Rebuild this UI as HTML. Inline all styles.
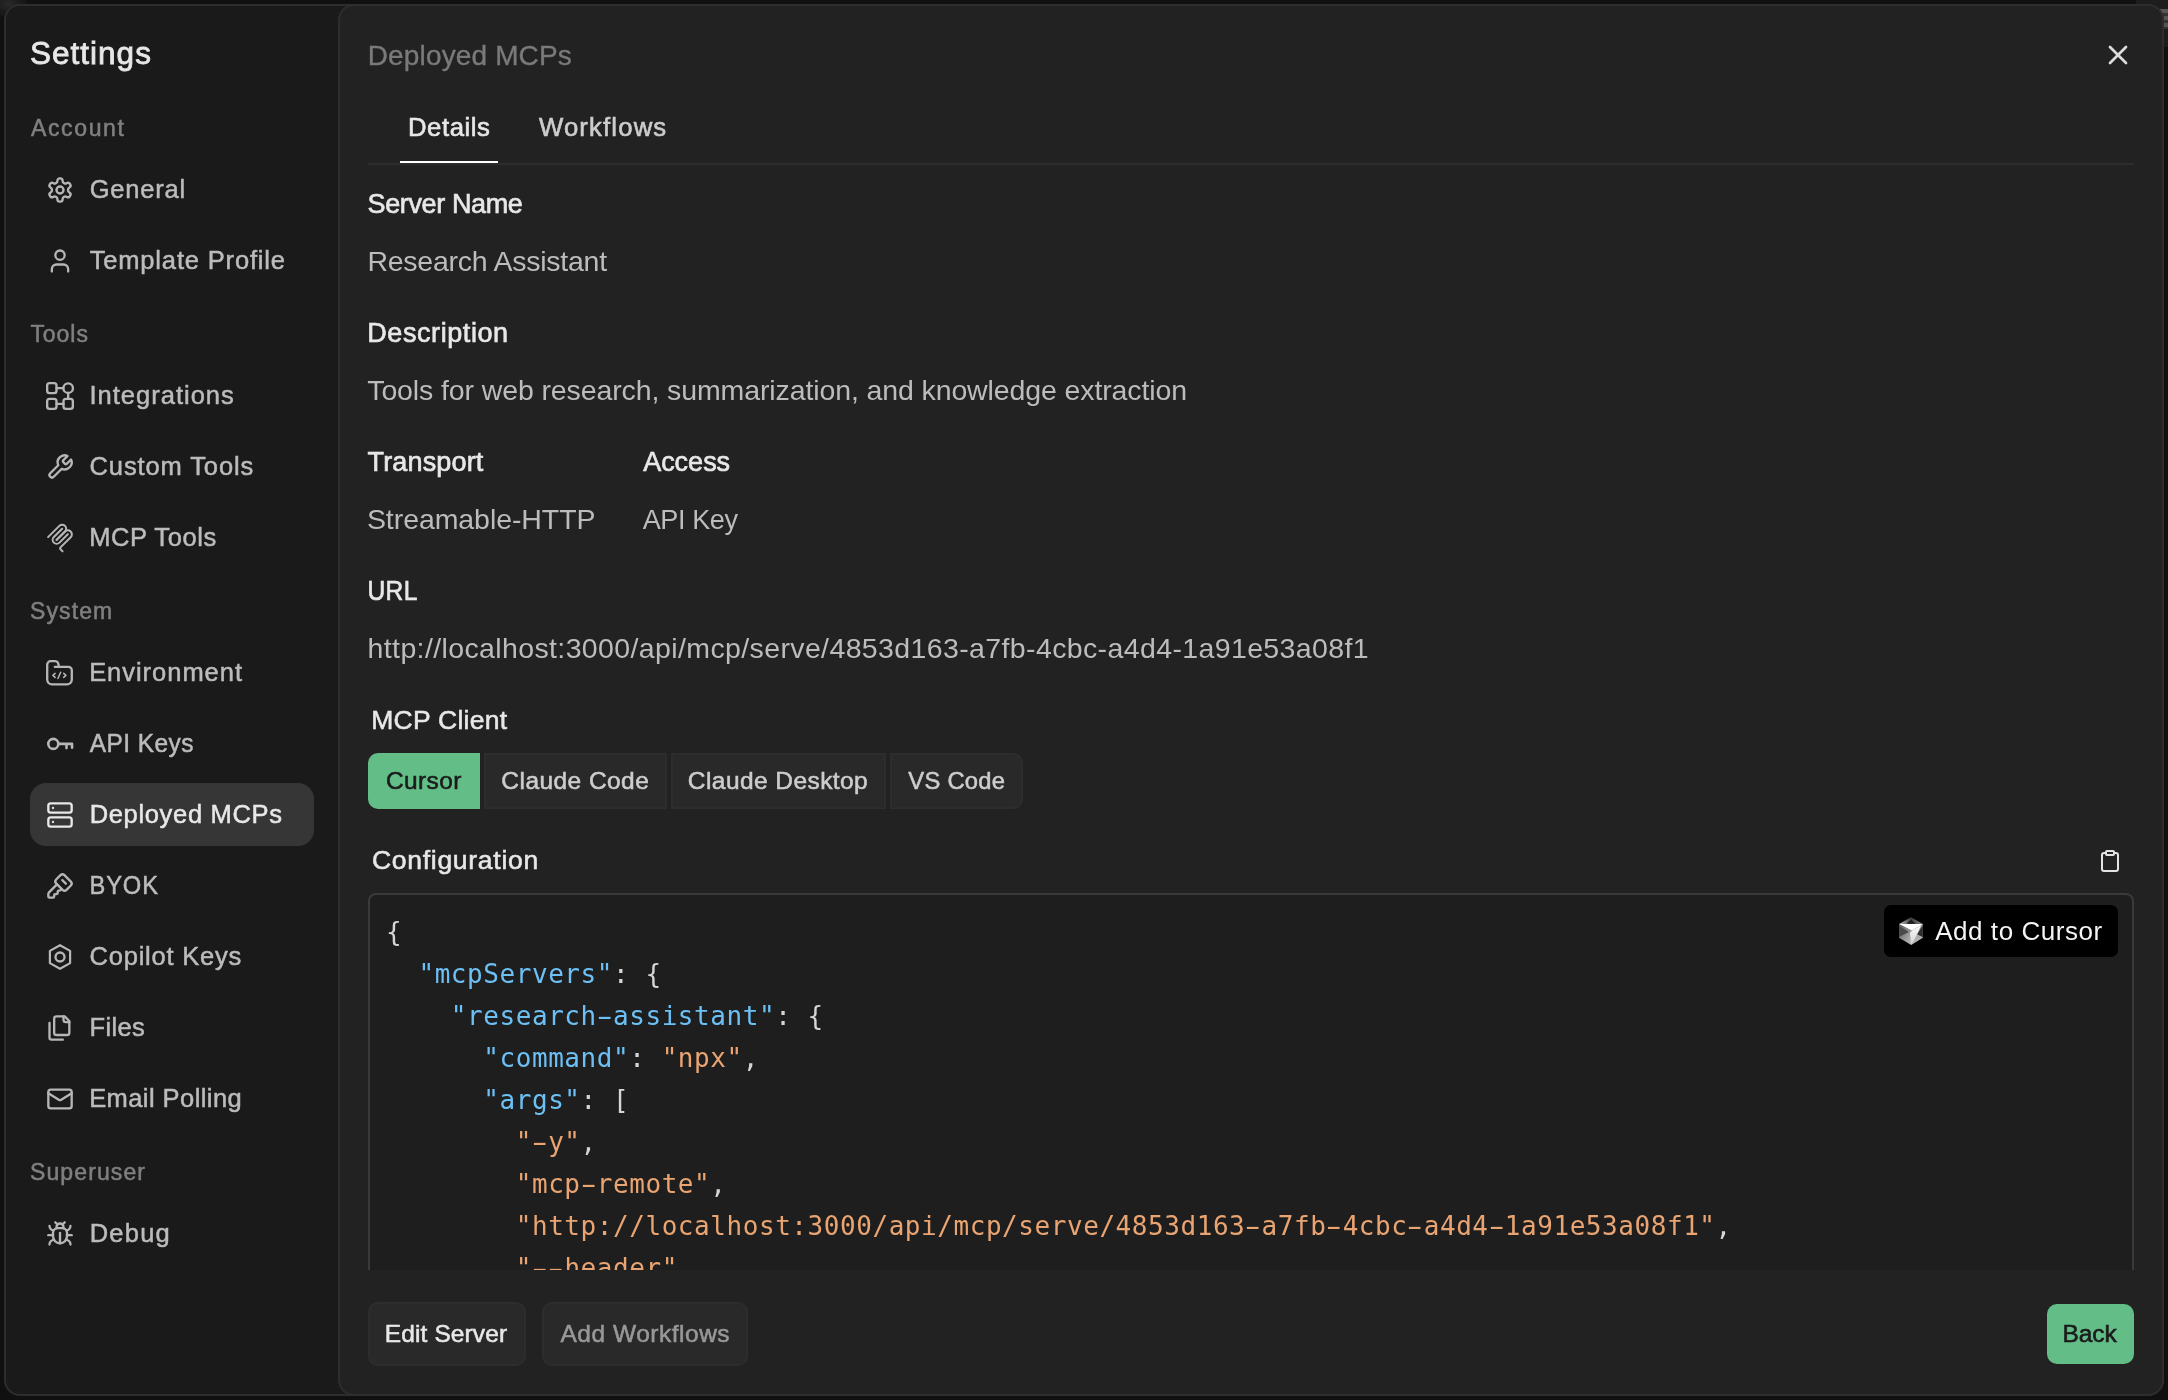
<!DOCTYPE html>
<html lang="en">
<head>
<meta charset="utf-8">
<title>Settings - Deployed MCPs</title>
<style>
*{box-sizing:border-box;margin:0;padding:0}
html,body{width:2168px;height:1400px;overflow:hidden;background:#101010;}
body{position:relative;font-family:"Liberation Sans", Arial, Helvetica, sans-serif;-webkit-font-smoothing:antialiased;}
.abs{position:absolute}
#texts{position:absolute;left:0;top:0;width:2168px;height:1400px;will-change:transform;}
.t{position:absolute;white-space:pre;line-height:1;font-weight:400;transform-origin:0 0;}
#bd1{position:absolute;left:0;top:0;width:26px;height:16px;background:radial-gradient(ellipse at 8px 4px,#2a2a2a 0,#1c1c1c 45%,rgba(16,16,16,0) 100%);}
#bd2{position:absolute;left:2136px;top:0;width:32px;height:47px;background:#1d1d1d;}
#bd3{position:absolute;left:2158px;top:9px;width:10px;height:20px;background:repeating-linear-gradient(to bottom,#555 0,#555 4px,#333 4px,#333 7px);filter:blur(0.6px);}
#modal{position:absolute;left:4px;top:4px;width:2160px;height:1392px;border-radius:16px;background:#1a1a1a;border:2px solid #2d2d2d;}
#panel{position:absolute;left:338px;top:4px;width:1826px;height:1392px;border-radius:16px;background:#222222;border:2px solid #2d2d2d;}
#active{position:absolute;left:30px;top:783px;width:284px;height:63px;border-radius:16px;background:#363636;}
#tabline{position:absolute;left:368px;top:163px;width:1766px;height:2px;background:#2d2d2d;}
#tabsel{position:absolute;left:400px;top:161px;width:98px;height:2px;background:#ffffff;}
.seg{position:absolute;top:753px;height:56px;background:#292929;border:2px solid #2d2d2d;}
#seg1{left:368px;width:112px;background:#62bd87;border-color:#62bd87;border-radius:10px 0 0 10px;}
#seg2{left:484px;width:183px;}
#seg3{left:671px;width:215px;}
#seg4{left:890px;width:133px;border-radius:0 10px 10px 0;}
#codewrap{position:absolute;left:368px;top:893px;width:1766px;height:377px;overflow:hidden;}
#codebox{position:absolute;left:0;top:0;width:1766px;height:700px;border:2px solid #3a3a3a;border-radius:8px;background:#1e1e1e;}
#code{will-change:transform;position:absolute;left:16.00px;top:16.04px;font-family:"DejaVu Sans Mono", "Liberation Mono", monospace;font-size:26.0px;line-height:42px;letter-spacing:0.56px;color:#d6d6d6;}
.cl{height:42px;white-space:pre;}
.hy{display:inline-block;transform:scaleX(1.75);}
.k{color:#6cc0f5}
.s{color:#e9a472}
#addcursor{position:absolute;left:1884px;top:905px;width:234px;height:52px;border-radius:7px;background:#000;}
.fbtn{position:absolute;top:1302px;height:64px;border-radius:10px;background:#292929;border:2px solid #2d2d2d;}
#fb1{left:368px;width:158px;}
#fb2{left:542px;width:206px;}
#fb3{left:2047px;width:87px;top:1304px;height:60px;background:#62bd87;border-color:#62bd87;}
svg{position:absolute;overflow:visible}
</style>
</head>
<body>

<div id="bd1"></div><div id="bd2"></div><div id="bd3"></div>
<div id="modal"></div>
<div id="panel"></div>
<div id="active"></div>
<div id="tabline"></div>
<div id="tabsel"></div>
<div class="seg" id="seg1"></div><div class="seg" id="seg2"></div><div class="seg" id="seg3"></div><div class="seg" id="seg4"></div>
<div id="codewrap"><div id="codebox"><div id="code">
<div class="cl">{</div>
<div class="cl">  <span class="k">"mcpServers"</span>: {</div>
<div class="cl">    <span class="k">"research<span class="hy">-</span>assistant"</span>: {</div>
<div class="cl">      <span class="k">"command"</span>: <span class="s">"npx"</span>,</div>
<div class="cl">      <span class="k">"args"</span>: [</div>
<div class="cl">        <span class="s">"<span class="hy">-</span>y"</span>,</div>
<div class="cl">        <span class="s">"mcp<span class="hy">-</span>remote"</span>,</div>
<div class="cl">        <span class="s">"http://localhost:3000/api/mcp/serve/4853d163<span class="hy">-</span>a7fb<span class="hy">-</span>4cbc<span class="hy">-</span>a4d4<span class="hy">-</span>1a91e53a08f1"</span>,</div>
<div class="cl">        <span class="s">"<span class="hy">-</span><span class="hy">-</span>header"</span>,</div>
</div></div></div>
<div id="addcursor"></div>
<div class="fbtn" id="fb1"></div><div class="fbtn" id="fb2"></div><div class="fbtn" id="fb3"></div>
<svg class="ic" style="left:36px;top:165px" width="48" height="48" viewBox="0 0 48 48" fill="none" stroke="#b6b6b6" stroke-width="2.33" stroke-linecap="round" stroke-linejoin="round"><g transform="translate(10 11) scale(1.16667)" stroke-width="2"><path d="M12.22 2h-.44a2 2 0 0 0-2 2v.18a2 2 0 0 1-1 1.73l-.43.25a2 2 0 0 1-2 0l-.15-.08a2 2 0 0 0-2.73.73l-.22.38a2 2 0 0 0 .73 2.73l.15.1a2 2 0 0 1 1 1.72v.51a2 2 0 0 1-1 1.74l-.15.09a2 2 0 0 0-.73 2.73l.22.38a2 2 0 0 0 2.73.73l.15-.08a2 2 0 0 1 2 0l.43.25a2 2 0 0 1 1 1.73V20a2 2 0 0 0 2 2h.44a2 2 0 0 0 2-2v-.18a2 2 0 0 1 1-1.73l.43-.25a2 2 0 0 1 2 0l.15.08a2 2 0 0 0 2.73-.73l.22-.39a2 2 0 0 0-.73-2.73l-.15-.08a2 2 0 0 1-1-1.74v-.5a2 2 0 0 1 1-1.74l.15-.09a2 2 0 0 0 .73-2.73l-.22-.38a2 2 0 0 0-2.73-.73l-.15.08a2 2 0 0 1-2 0l-.43-.25a2 2 0 0 1-1-1.73V4a2 2 0 0 0-2-2z"/><circle cx="12" cy="12" r="3"/></g></svg>
<svg class="ic" style="left:36px;top:236px" width="48" height="48" viewBox="0 0 48 48" fill="none" stroke="#b6b6b6" stroke-width="2.33" stroke-linecap="round" stroke-linejoin="round"><g transform="translate(10 11) scale(1.16667)" stroke-width="2"><path d="M19 21v-2a4 4 0 0 0-4-4H9a4 4 0 0 0-4 4v2"/><circle cx="12" cy="7" r="4"/></g></svg>
<svg class="ic" style="left:36px;top:371px" width="48" height="48" viewBox="0 0 48 48" fill="none" stroke="#b6b6b6" stroke-width="2.33" stroke-linecap="round" stroke-linejoin="round"><g transform="translate(10 11) scale(1.16667)" stroke-width="2"><rect x="1" y="1" width="8" height="8.5" rx="2"/><circle cx="19" cy="5.25" r="4.1"/><rect x="1" y="14.5" width="8" height="8.5" rx="2"/><rect x="15" y="14.5" width="8" height="8.5" rx="2"/><path d="M9 5.25h5.9M19 9.4v5.1M9 18.75h6"/></g></svg>
<svg class="ic" style="left:36px;top:442px" width="48" height="48" viewBox="0 0 48 48" fill="none" stroke="#b6b6b6" stroke-width="2.33" stroke-linecap="round" stroke-linejoin="round"><g transform="translate(10 11) scale(1.16667)" stroke-width="2"><path d="M14.7 6.3a1 1 0 0 0 0 1.4l1.6 1.6a1 1 0 0 0 1.4 0l3.77-3.77a6 6 0 0 1-7.94 7.94l-6.91 6.91a2.12 2.12 0 0 1-3-3l6.91-6.91a6 6 0 0 1 7.94-7.94l-3.76 3.76z"/></g></svg>
<svg class="ic" style="left:36px;top:513px" width="48" height="48" viewBox="0 0 48 48" fill="none" stroke="#b6b6b6" stroke-width="2.33" stroke-linecap="round" stroke-linejoin="round"><g transform="translate(7.94 7.9) scale(0.166)" stroke-width="12"><path d="M25 97.8528L92.8823 29.9706C102.255 20.598 117.451 20.598 126.823 29.9706V29.9706C136.196 39.3431 136.196 54.5391 126.823 63.9117L75.5581 115.177"/><path d="M76.2653 114.47L126.823 63.9117C136.196 54.5391 151.392 54.5391 160.765 63.9117L161.118 64.2652C170.491 73.6378 170.491 88.8338 161.118 98.2063L99.7248 159.6C96.6006 162.724 96.6006 167.789 99.7248 170.913L112.331 183.52"/><path d="M109.853 46.9411L59.6482 97.1457C50.2757 106.518 50.2757 121.714 59.6482 131.087V131.087C69.0208 140.459 84.2168 140.459 93.5894 131.087L143.794 80.8822"/></g></svg>
<svg class="ic" style="left:36px;top:648px" width="48" height="48" viewBox="0 0 48 48" fill="none" stroke="#b6b6b6" stroke-width="2.33" stroke-linecap="round" stroke-linejoin="round"><path d="M18.8 18.8H32.4A3.4 3.4 0 0 1 35.8 22.2V31.6A4.8 4.8 0 0 1 31 36.4H16A4.8 4.8 0 0 1 11.2 31.6V16.7A3.5 3.5 0 0 1 14.7 13.2H19.2C21.3 13.2 22.6 15.4 22.8 18.6"/><g stroke-width="1.5"><path d="M19.1 25.4L16.9 27.4L19.1 29.4"/><path d="M21.9 30.5L24.7 24.3"/><path d="M27.7 25.4L29.9 27.4L27.7 29.4"/></g></svg>
<svg class="ic" style="left:36px;top:719px" width="48" height="48" viewBox="0 0 48 48" fill="none" stroke="#b6b6b6" stroke-width="2.33" stroke-linecap="round" stroke-linejoin="round"><g stroke-width="2.6"><circle cx="17.3" cy="24.9" r="5"/><path d="M22.3 24.9H36.05V28.8M30.5 24.9V29.1"/></g></svg>
<svg class="ic" style="left:36px;top:790px" width="48" height="48" viewBox="0 0 48 48" fill="none" stroke="#e8e8e8" stroke-width="2.33" stroke-linecap="round" stroke-linejoin="round"><g transform="translate(10 11) scale(1.16667)" stroke-width="2"><rect width="20" height="8" x="2" y="2" rx="2" ry="2"/><rect width="20" height="8" x="2" y="14" rx="2" ry="2"/><line x1="6" x2="6.01" y1="6" y2="6"/><line x1="6" x2="6.01" y1="18" y2="18"/></g></svg>
<svg class="ic" style="left:36px;top:861px" width="48" height="48" viewBox="0 0 48 48" fill="none" stroke="#b6b6b6" stroke-width="2.33" stroke-linecap="round" stroke-linejoin="round"><g transform="translate(10 11) scale(1.16667)" stroke-width="2"><path d="M12.4 2.7a2.5 2.5 0 0 1 3.4 0l5.5 5.5a2.5 2.5 0 0 1 0 3.4l-3.7 3.7a2.5 2.5 0 0 1-3.4 0L8.7 9.8a2.5 2.5 0 0 1 0-3.4z"/><path d="m14 7 3 3"/><path d="m9.4 10.6-6.814 6.814A2 2 0 0 0 2 18.828V21a1 1 0 0 0 1 1h3a1 1 0 0 0 1-1v-1a1 1 0 0 1 1-1h1a1 1 0 0 0 1-1v-1a1 1 0 0 1 1-1h.172a2 2 0 0 0 1.414-.586l.814-.814"/></g></svg>
<svg class="ic" style="left:36px;top:932px" width="48" height="48" viewBox="0 0 48 48" fill="none" stroke="#b6b6b6" stroke-width="2.33" stroke-linecap="round" stroke-linejoin="round"><path stroke-width="2.2" d="M24 13.2L34.1 18.9V31.1L24 36.8L13.9 31.1V18.9Z"/><circle cx="24" cy="25" r="4.5"/></svg>
<svg class="ic" style="left:36px;top:1003px" width="48" height="48" viewBox="0 0 48 48" fill="none" stroke="#b6b6b6" stroke-width="2.33" stroke-linecap="round" stroke-linejoin="round"><g transform="translate(10 11) scale(1.16667)" stroke-width="2"><path d="M20 7h-3a2 2 0 0 1-2-2V2"/><path d="M9 18a2 2 0 0 1-2-2V4a2 2 0 0 1 2-2h7l4 4v10a2 2 0 0 1-2 2Z"/><path d="M3 7.6v12.8A1.6 1.6 0 0 0 4.6 22h9.8"/></g></svg>
<svg class="ic" style="left:36px;top:1074px" width="48" height="48" viewBox="0 0 48 48" fill="none" stroke="#b6b6b6" stroke-width="2.33" stroke-linecap="round" stroke-linejoin="round"><g transform="translate(10 11) scale(1.16667)" stroke-width="2"><rect width="20" height="16" x="2" y="4" rx="2"/><path d="m22 7-8.97 5.7a1.94 1.94 0 0 1-2.06 0L2 7"/></g></svg>
<svg class="ic" style="left:36px;top:1209px" width="48" height="48" viewBox="0 0 48 48" fill="none" stroke="#b6b6b6" stroke-width="2.33" stroke-linecap="round" stroke-linejoin="round"><g transform="translate(10 11) scale(1.16667)" stroke-width="2"><path d="m8 2 1.88 1.88"/><path d="M14.12 3.88 16 2"/><path d="M9 7.13v-1a3.003 3.003 0 1 1 6 0v1"/><path d="M12 20c-3.3 0-6-2.7-6-6v-3a4 4 0 0 1 4-4h4a4 4 0 0 1 4 4v3c0 3.3-2.7 6-6 6"/><path d="M12 20v-9"/><path d="M6.53 9C4.6 8.8 3 7.1 3 5"/><path d="M6 13H2"/><path d="M3 21c0-2.1 1.7-3.9 3.8-4"/><path d="M20.97 5c0 2.1-1.6 3.8-3.5 4"/><path d="M22 13h-4"/><path d="M17.2 17c2.1.1 3.8 1.9 3.8 4"/></g></svg>
<svg class="ic" style="left:2102px;top:39px" width="32" height="32" viewBox="0 0 24 24" fill="none" stroke="#dcdcdc" stroke-width="2" stroke-linecap="round" stroke-linejoin="round"><path d="M18 6 6 18"/><path d="m6 6 12 12"/></svg>
<svg class="ic" style="left:2098px;top:849px" width="24" height="24" viewBox="0 0 24 24" fill="none" stroke="#e4e4e4" stroke-width="2" stroke-linecap="round" stroke-linejoin="round"><rect width="8" height="4" x="8" y="2" rx="1" ry="1"/><path d="M16 4h2a2 2 0 0 1 2 2v14a2 2 0 0 1-2 2H6a2 2 0 0 1-2-2V6a2 2 0 0 1 2-2h2"/></svg>
<svg class="ic" style="left:1876px;top:897px" width="72" height="72" viewBox="0 0 72 72"><defs><linearGradient id="cg1" x1="0" y1="0" x2="1" y2="0"><stop offset="0" stop-color="#c8c8c8"/><stop offset="0.5" stop-color="#3a3a3a"/><stop offset="1" stop-color="#8a8a8a"/></linearGradient><linearGradient id="cg2" x1="0" y1="0" x2="1" y2="1"><stop offset="0" stop-color="#5a5a5a"/><stop offset="1" stop-color="#c4c4c4"/></linearGradient><linearGradient id="cg3" x1="0" y1="0" x2="0" y2="1"><stop offset="0" stop-color="#ffffff"/><stop offset="1" stop-color="#d0d0d0"/></linearGradient><linearGradient id="cg4" x1="0" y1="0" x2="0" y2="1"><stop offset="0" stop-color="#9c9c9c"/><stop offset="1" stop-color="#b8b8b8"/></linearGradient></defs><polygon points="23.04,27.10 34.97,20.31 46.90,27.10" fill="url(#cg1)"/><polygon points="34.97,22.63 30.86,26.74 39.60,26.74" fill="#1c1c1c"/><polygon points="23.04,27.10 36.00,33.69 35.23,47.93 23.04,40.73" fill="url(#cg2)"/><polygon points="23.04,28.80 32.92,34.97 23.04,40.12" fill="#4a4a4a"/><polygon points="46.90,27.10 46.90,40.73 35.23,47.93 36.00,33.69" fill="url(#cg4)"/><polygon points="46.90,28.03 46.90,40.37 41.14,37.13" fill="#2e2e2e"/><polygon points="36.00,33.69 45.26,28.03 39.34,40.63 35.23,47.93 33.94,36.00" fill="url(#cg3)"/><polygon points="23.04,27.10 46.90,27.10 36.00,33.69" fill="#ffffff"/></svg>
<div id="texts">
<span class="t" id="settings" style="left:30px;padding-left:0.09px;top:38.33px;font-size:31.5px;color:#e8e8e8;letter-spacing:0.999px;-webkit-text-stroke:0.8px #e8e8e8;">Settings</span>
<span class="t" id="h_account" style="left:31px;padding-left:0.02px;top:116.53px;font-size:23px;color:#808080;letter-spacing:1.625px;-webkit-text-stroke:0.5px #808080;">Account</span>
<span class="t" id="h_tools" style="left:30px;padding-left:0.38px;top:322.53px;font-size:23px;color:#808080;letter-spacing:0.970px;-webkit-text-stroke:0.5px #808080;">Tools</span>
<span class="t" id="h_system" style="left:30px;padding-left:0.00px;top:599.53px;font-size:23px;color:#808080;letter-spacing:1.100px;-webkit-text-stroke:0.5px #808080;">System</span>
<span class="t" id="h_super" style="left:30px;padding-left:0.00px;top:1160.53px;font-size:23px;color:#808080;letter-spacing:1.109px;-webkit-text-stroke:0.5px #808080;">Superuser</span>
<span class="t" id="i_general" style="left:89px;padding-left:0.70px;top:177.41px;font-size:25.5px;color:#bcbcbc;letter-spacing:0.777px;-webkit-text-stroke:0.5px #bcbcbc;">General</span>
<span class="t" id="i_template" style="left:89px;padding-left:0.68px;top:248.41px;font-size:25.5px;color:#bcbcbc;letter-spacing:0.835px;-webkit-text-stroke:0.5px #bcbcbc;">Template Profile</span>
<span class="t" id="i_integrations" style="left:89px;padding-left:0.40px;top:383.41px;font-size:25.5px;color:#bcbcbc;letter-spacing:1.016px;-webkit-text-stroke:0.5px #bcbcbc;">Integrations</span>
<span class="t" id="i_custom" style="left:89px;padding-left:0.57px;top:454.41px;font-size:25.5px;color:#bcbcbc;letter-spacing:0.878px;-webkit-text-stroke:0.5px #bcbcbc;">Custom Tools</span>
<span class="t" id="i_mcp" style="left:89px;padding-left:0.14px;top:525.41px;font-size:25.5px;color:#bcbcbc;letter-spacing:0.593px;-webkit-text-stroke:0.5px #bcbcbc;">MCP Tools</span>
<span class="t" id="i_env" style="left:89px;padding-left:0.14px;top:660.41px;font-size:25.5px;color:#bcbcbc;letter-spacing:0.973px;-webkit-text-stroke:0.5px #bcbcbc;">Environment</span>
<span class="t" id="i_api" style="left:89px;padding-left:0.92px;top:731.41px;font-size:25.5px;color:#bcbcbc;letter-spacing:0.423px;-webkit-text-stroke:0.5px #bcbcbc;transform:scaleX(0.96);">API Keys</span>
<span class="t" id="i_deployed" style="left:89px;padding-left:0.65px;top:802.41px;font-size:25.5px;color:#e8e8e8;letter-spacing:0.670px;-webkit-text-stroke:0.5px #e8e8e8;">Deployed MCPs</span>
<span class="t" id="i_byok" style="left:89px;padding-left:0.63px;top:873.41px;font-size:25.5px;color:#bcbcbc;letter-spacing:0.886px;-webkit-text-stroke:0.5px #bcbcbc;transform:scaleX(0.93);">BYOK</span>
<span class="t" id="i_copilot" style="left:89px;padding-left:0.57px;top:944.41px;font-size:25.5px;color:#bcbcbc;letter-spacing:0.772px;-webkit-text-stroke:0.5px #bcbcbc;">Copilot Keys</span>
<span class="t" id="i_files" style="left:89px;padding-left:0.46px;top:1015.41px;font-size:25.5px;color:#bcbcbc;letter-spacing:0.380px;-webkit-text-stroke:0.5px #bcbcbc;">Files</span>
<span class="t" id="i_email" style="left:89px;padding-left:0.14px;top:1086.41px;font-size:25.5px;color:#bcbcbc;letter-spacing:0.437px;-webkit-text-stroke:0.5px #bcbcbc;">Email Polling</span>
<span class="t" id="i_debug" style="left:89px;padding-left:0.65px;top:1221.41px;font-size:25.5px;color:#bcbcbc;letter-spacing:1.242px;-webkit-text-stroke:0.5px #bcbcbc;">Debug</span>
<span class="t" id="title" style="left:367px;padding-left:0.76px;top:42.29px;font-size:28px;color:#7a7a7a;letter-spacing:0.145px;-webkit-text-stroke:0.35px #7a7a7a;">Deployed MCPs</span>
<span class="t" id="tab1" style="left:407px;padding-left:0.95px;top:115.24px;font-size:25.7px;color:#e8e8e8;letter-spacing:0.581px;-webkit-text-stroke:0.6px #e8e8e8;">Details</span>
<span class="t" id="tab2" style="left:539px;padding-left:0.01px;top:115.24px;font-size:25.7px;color:#cdcdcd;letter-spacing:1.148px;-webkit-text-stroke:0.6px #cdcdcd;">Workflows</span>
<span class="t" id="l_name" style="left:367px;padding-left:0.60px;top:191.14px;font-size:27px;color:#e8e8e8;letter-spacing:-0.378px;-webkit-text-stroke:0.65px #e8e8e8;">Server Name</span>
<span class="t" id="v_name" style="left:367px;padding-left:0.40px;top:246.87px;font-size:28.5px;color:#bcbcbc;letter-spacing:-0.252px;">Research Assistant</span>
<span class="t" id="l_desc" style="left:367px;padding-left:0.24px;top:320.14px;font-size:27px;color:#e8e8e8;letter-spacing:0.583px;-webkit-text-stroke:0.65px #e8e8e8;">Description</span>
<span class="t" id="v_desc" style="left:367px;padding-left:0.25px;top:375.87px;font-size:28.5px;color:#bcbcbc;letter-spacing:-0.114px;">Tools for web research, summarization, and knowledge extraction</span>
<span class="t" id="l_trans" style="left:367px;padding-left:0.55px;top:449.14px;font-size:27px;color:#e8e8e8;letter-spacing:0.153px;-webkit-text-stroke:0.65px #e8e8e8;">Transport</span>
<span class="t" id="l_access" style="left:643px;padding-left:0.14px;top:449.14px;font-size:27px;color:#e8e8e8;letter-spacing:-0.006px;-webkit-text-stroke:0.65px #e8e8e8;">Access</span>
<span class="t" id="v_trans" style="left:366px;padding-left:0.95px;top:504.87px;font-size:28.5px;color:#bcbcbc;letter-spacing:-0.075px;">Streamable-HTTP</span>
<span class="t" id="v_access" style="left:642px;padding-left:0.76px;top:504.87px;font-size:28.5px;color:#bcbcbc;letter-spacing:-0.454px;transform:scaleX(0.95);">API Key</span>
<span class="t" id="l_url" style="left:367px;padding-left:0.46px;top:578.14px;font-size:27px;color:#e8e8e8;letter-spacing:0.490px;-webkit-text-stroke:0.65px #e8e8e8;transform:scaleX(0.91);">URL</span>
<span class="t" id="v_url" style="left:367px;padding-left:0.58px;top:633.87px;font-size:28.5px;color:#bcbcbc;letter-spacing:0.375px;">http://localhost:3000/api/mcp/serve/4853d163-a7fb-4cbc-a4d4-1a91e53a08f1</span>
<span class="t" id="l_client" style="left:371px;padding-left:0.20px;top:706.56px;font-size:26.5px;color:#e8e8e8;letter-spacing:0.272px;-webkit-text-stroke:0.55px #e8e8e8;">MCP Client</span>
<span class="t" id="b_cursor" style="left:385px;padding-left:0.89px;top:769.26px;font-size:24.5px;color:#1b1b1b;letter-spacing:0.394px;-webkit-text-stroke:0.55px #1b1b1b;">Cursor</span>
<span class="t" id="b_cc" style="left:501px;padding-left:0.37px;top:769.26px;font-size:24.5px;color:#cdcdcd;letter-spacing:0.443px;-webkit-text-stroke:0.55px #cdcdcd;">Claude Code</span>
<span class="t" id="b_cd" style="left:687px;padding-left:0.87px;top:769.26px;font-size:24.5px;color:#cdcdcd;letter-spacing:0.428px;-webkit-text-stroke:0.55px #cdcdcd;">Claude Desktop</span>
<span class="t" id="b_vs" style="left:908px;padding-left:0.38px;top:769.26px;font-size:24.5px;color:#cdcdcd;letter-spacing:0.262px;-webkit-text-stroke:0.55px #cdcdcd;transform:scaleX(0.97);">VS Code</span>
<span class="t" id="l_conf" style="left:371px;padding-left:0.94px;top:846.56px;font-size:26.5px;color:#e8e8e8;letter-spacing:0.720px;-webkit-text-stroke:0.55px #e8e8e8;">Configuration</span>
<span class="t" id="b_add" style="left:1935px;padding-left:0.22px;top:917.99px;font-size:26px;color:#f4f4f4;letter-spacing:0.541px;">Add to Cursor</span>
<span class="t" id="b_edit" style="left:384px;padding-left:0.82px;top:1322.26px;font-size:24.5px;color:#e8e8e8;letter-spacing:0.111px;-webkit-text-stroke:0.55px #e8e8e8;">Edit Server</span>
<span class="t" id="b_addwf" style="left:560px;padding-left:0.47px;top:1322.26px;font-size:24.5px;color:#989898;letter-spacing:0.517px;-webkit-text-stroke:0.55px #989898;">Add Workflows</span>
<span class="t" id="b_back" style="left:2062px;padding-left:0.62px;top:1322.26px;font-size:24.5px;color:#1b1b1b;letter-spacing:-0.107px;-webkit-text-stroke:0.6px #1b1b1b;">Back</span>
</div>

</body>
</html>
